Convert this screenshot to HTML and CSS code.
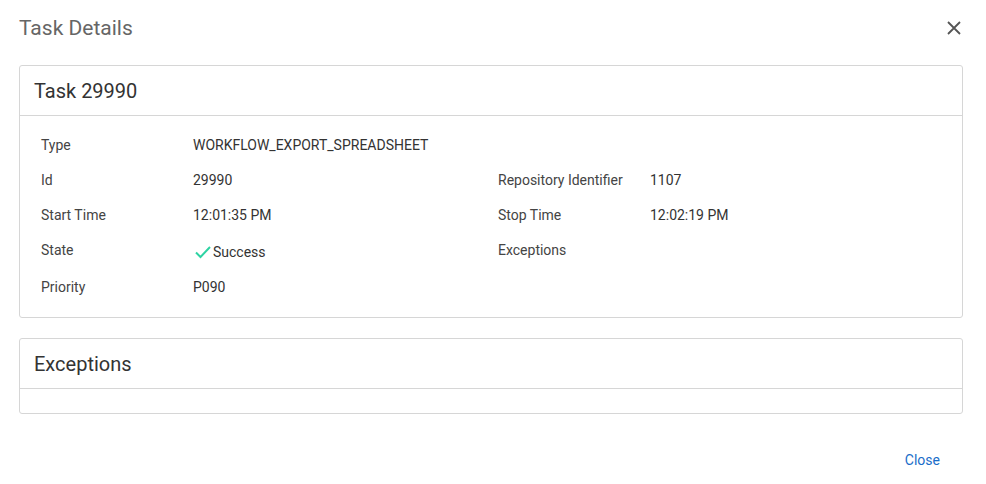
FILE: index.html
```html
<!DOCTYPE html>
<html lang="en">
<head>
  <meta charset="UTF-8" />
  <title>Task Details</title>
  <link rel="stylesheet" href="styles.css">
</head>
<body>
  <div class="dialog">
    <div class="dialog-head">
      <h2>Task Details</h2>
      <button type="button" class="icon-close" aria-label="Close">
        <svg width="14" height="14" viewBox="0 0 14 14"><path d="M1 1L13 13M13 1L1 13" stroke="#555" stroke-width="1.8" fill="none"/></svg>
      </button>
    </div>

    <div class="card">
      <div class="card-head">Task 29990</div>
      <div class="card-body details">
        <span class="label">Type</span>
        <span class="value">WORKFLOW_EXPORT_SPREADSHEET</span>
        <span></span>
        <span></span>

        <span class="label">Id</span>
        <span class="value">29990</span>
        <span class="label">Repository Identifier</span>
        <span class="value">1107</span>

        <span class="label">Start Time</span>
        <span class="value">12:01:35 PM</span>
        <span class="label">Stop Time</span>
        <span class="value">12:02:19 PM</span>

        <span class="label tall">State</span>
        <span class="value state">
          <svg width="18" height="14" viewBox="0 0 18 14"><path d="M2 7.5L6.5 12L16 2" stroke="#2ed3a3" stroke-width="2" fill="none"/></svg>
          Success
        </span>
        <span class="label tall">Exceptions</span>
        <span class="value"></span>

        <span class="label">Priority</span>
        <span class="value">P090</span>
        <span></span>
        <span></span>
      </div>
    </div>

    <div class="card">
      <div class="card-head">Exceptions</div>
      <div class="card-body empty"></div>
    </div>

    <div class="dialog-foot">
      <button type="button" class="link-btn">Close</button>
    </div>
  </div>
</body>
</html>
```

FILE: styles.css
```css
body {
  margin: 0;
  font-family: Roboto, "Liberation Sans", sans-serif;
  background: #fff;
  color: #333;
}
.dialog {
  padding: 0 23px 0 19px;
}
.dialog-head {
  display: flex;
  align-items: center;
  justify-content: space-between;
  height: 56px;
}
.dialog-head h2 {
  margin: 0;
  font-size: 21px;
  font-weight: 400;
  color: #666;
}
.icon-close {
  background: none;
  border: none;
  padding: 0;
  margin-right: 2px;
  display: flex;
  cursor: pointer;
}
.card {
  border: 1px solid #d6d6d6;
  border-radius: 3px;
  margin-top: 9px;
}
.card + .card {
  margin-top: 20px;
}
.card-head {
  height: 49px;
  display: flex;
  align-items: center;
  padding-left: 14px;
  font-size: 20px;
  color: #333;
  border-bottom: 1px solid #d6d6d6;
}
.details {
  display: grid;
  grid-template-columns: 152px 305px 152px 1fr;
  grid-template-rows: 35px 35px 35px 37px 35px;
  align-items: center;
  padding: 11px 21px 13px;
  font-size: 14px;
}
.details .label {
  color: #444;
}
.details .label.tall {
  margin-bottom: 2px;
}
.details .value {
  color: #333;
}
.details .state {
  display: flex;
  align-items: center;
  gap: 1px;
  margin-top: 3px;
  margin-left: 1px;
}
.empty {
  height: 24px;
}
.dialog-foot {
  display: flex;
  justify-content: flex-end;
  padding: 38px 23px 0 0;
}
.link-btn {
  background: none;
  border: none;
  padding: 0;
  font-family: inherit;
  font-size: 14px;
  color: #1a6dc9;
  cursor: pointer;
}
```
